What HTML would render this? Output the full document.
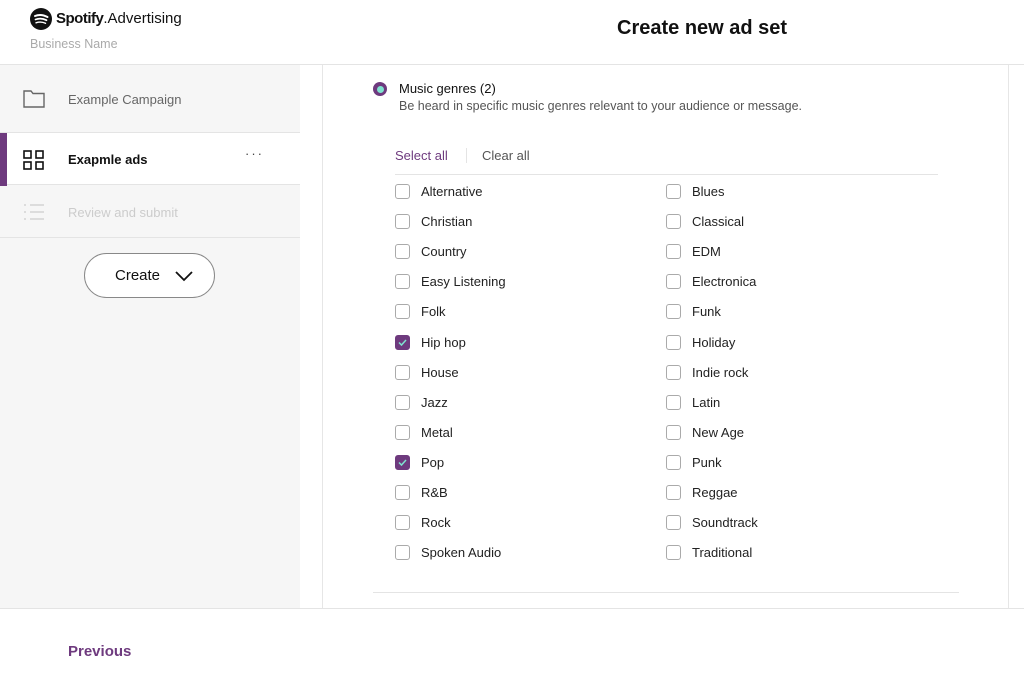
<!DOCTYPE html>
<html><head><style>
*{box-sizing:border-box;margin:0;padding:0}
body{width:1024px;height:679px;overflow:hidden;font-family:"Liberation Sans",sans-serif;background:#fff;position:relative;color:#222}
.hdr{position:absolute;left:0;top:0;width:1024px;height:65px;border-bottom:1px solid #e4e4e4;background:#fff}
.side{position:absolute;left:0;top:65px;width:300px;height:544px;background:#f6f6f6}
.item{position:absolute;left:0;width:300px;font-size:13px}
.main{position:absolute;left:322px;top:65px;width:687px;height:544px;border-left:1px solid #e6e6e6;border-right:1px solid #e6e6e6}
.foot{position:absolute;left:0;top:608px;width:1024px;height:71px;border-top:1px solid #e4e4e4;background:#fff}
.cb{position:absolute;width:15px;height:15px;border:1px solid #aaa;border-radius:3px;background:#fff}
.cb.on{background:#6e3a7e;border-color:#6e3a7e}
.lb{position:absolute;font-size:13px;color:#222}
</style></head><body>
<div class="hdr">
<svg style="position:absolute;left:30px;top:8px" width="22" height="22" viewBox="0 0 22 22"><circle cx="11" cy="11" r="11" fill="#111"/><path d="M5 8 Q11 5.5 17.5 9" stroke="#fff" stroke-width="2" fill="none" stroke-linecap="round"/><path d="M5.5 11.5 Q11 9.5 16.5 12.2" stroke="#fff" stroke-width="1.7" fill="none" stroke-linecap="round"/><path d="M6 14.8 Q11 13.2 15.5 15.3" stroke="#fff" stroke-width="1.4" fill="none" stroke-linecap="round"/></svg>
<div style="position:absolute;left:56px;top:10px;font-size:15px;color:#111"><b style="letter-spacing:-0.5px">Spotify</b>.Advertising</div>
<div style="position:absolute;left:30px;top:37px;font-size:12.5px;color:#aaa">Business Name</div>
<div style="position:absolute;left:617px;top:17px;font-size:20px;font-weight:bold;color:#111">Create new ad set</div>
</div>
<div class="side">
<div class="item" style="top:0;height:67px">
<svg style="position:absolute;left:23px;top:25px" width="22" height="18" viewBox="0 0 22 18"><path d="M1 1H8L10 3.5H21V17H1Z" fill="none" stroke="#666" stroke-width="1.4"/></svg>
<div style="position:absolute;left:68px;top:27px;color:#666">Example Campaign</div></div>
<div class="item" style="top:67px;height:53px;background:#fff;border-top:1px solid #e4e4e4;border-bottom:1px solid #e4e4e4">
<div style="position:absolute;left:0;top:0;width:7px;height:53px;background:#6e3a7e"></div>
<svg style="position:absolute;left:23px;top:17px" width="22" height="20" viewBox="0 0 22 20"><g fill="none" stroke="#111" stroke-width="1.6"><rect x="1" y="1" width="7" height="7"/><rect x="13" y="1" width="7" height="7"/><rect x="1" y="12" width="7" height="7"/><rect x="13" y="12" width="7" height="7"/></g></svg>
<div style="position:absolute;left:68px;top:19px;font-weight:bold;color:#111">Exapmle ads</div>
<div style="position:absolute;left:245px;top:13px;color:#444;letter-spacing:2px">···</div></div>
<div class="item" style="top:120px;height:53px;border-bottom:1px solid #e4e4e4">
<svg style="position:absolute;left:23px;top:18px" width="22" height="18" viewBox="0 0 22 18"><g stroke="#ccc" stroke-width="1.2"><path d="M7 2H21M7 9H21M7 16H21"/><path d="M1 2H3M1 9H3M1 16H3"/></g></svg>
<div style="position:absolute;left:68px;top:20px;color:#ccc">Review and submit</div></div>
<div style="position:absolute;left:84px;top:188px;width:131px;height:45px;border:1px solid #888;border-radius:23px;background:#fff">
<div style="position:absolute;left:30px;top:13px;font-size:15px;color:#111">Create</div>
<svg style="position:absolute;left:89px;top:16px" width="20" height="12" viewBox="0 0 20 12"><path d="M2 2L10 10L18 2" fill="none" stroke="#111" stroke-width="1.8"/></svg></div>
</div>
<div class="main">
<div style="position:absolute;left:50px;top:17px;width:14px;height:14px;border-radius:50%;background:#6e3a7e"><div style="position:absolute;left:3.5px;top:3.5px;width:7px;height:7px;border-radius:50%;background:#7fe3d0"></div></div>
<div style="position:absolute;left:76px;top:16px;font-size:13px;color:#111">Music genres (2)</div>
<div style="position:absolute;left:76px;top:34px;font-size:12.5px;color:#555">Be heard in specific music genres relevant to your audience or message.</div>
<div style="position:absolute;left:72px;top:83px;font-size:13px;color:#6e3a7e">Select all</div>
<div style="position:absolute;left:143px;top:83px;width:1px;height:15px;background:#e4e4e4"></div>
<div style="position:absolute;left:159px;top:83px;font-size:13px;color:#555">Clear all</div>
<div style="position:absolute;left:72px;top:109px;width:543px;height:1px;background:#e4e4e4"></div>
<div style="position:absolute;left:50px;top:527px;width:586px;height:1px;background:#e4e4e4"></div>
<div id="g"></div>
</div>
<div class="foot"><div style="position:absolute;left:68px;top:34px;font-size:15px;font-weight:bold;color:#6e3a7e">Previous</div></div>
<script>
var L=["Alternative","Christian","Country","Easy Listening","Folk","Hip hop","House","Jazz","Metal","Pop","R&B","Rock","Spoken Audio"];
var R=["Blues","Classical","EDM","Electronica","Funk","Holiday","Indie rock","Latin","New Age","Punk","Reggae","Soundtrack","Traditional"];
var h="";
function row(arr,cx,tx){arr.forEach(function(t,i){var y=119+i*30.1;var on=(t=="Hip hop"||t=="Pop");
h+='<div class="cb'+(on?' on':'')+'" style="left:'+cx+'px;top:'+y+'px">'+(on?'<svg width="13" height="13" viewBox="0 0 13 13" style="position:absolute;left:0;top:0"><path d="M3 6.5L5.5 9L10 4" stroke="#7fe3d0" stroke-width="1.5" fill="none"/></svg>':'')+'</div>';
h+='<div class="lb" style="left:'+tx+'px;top:'+(y)+'px">'+t.replace("&","&amp;")+'</div>';});}
row(L,72,98);row(R,343,369);
document.getElementById("g").outerHTML=h;
</script>
</body></html>
